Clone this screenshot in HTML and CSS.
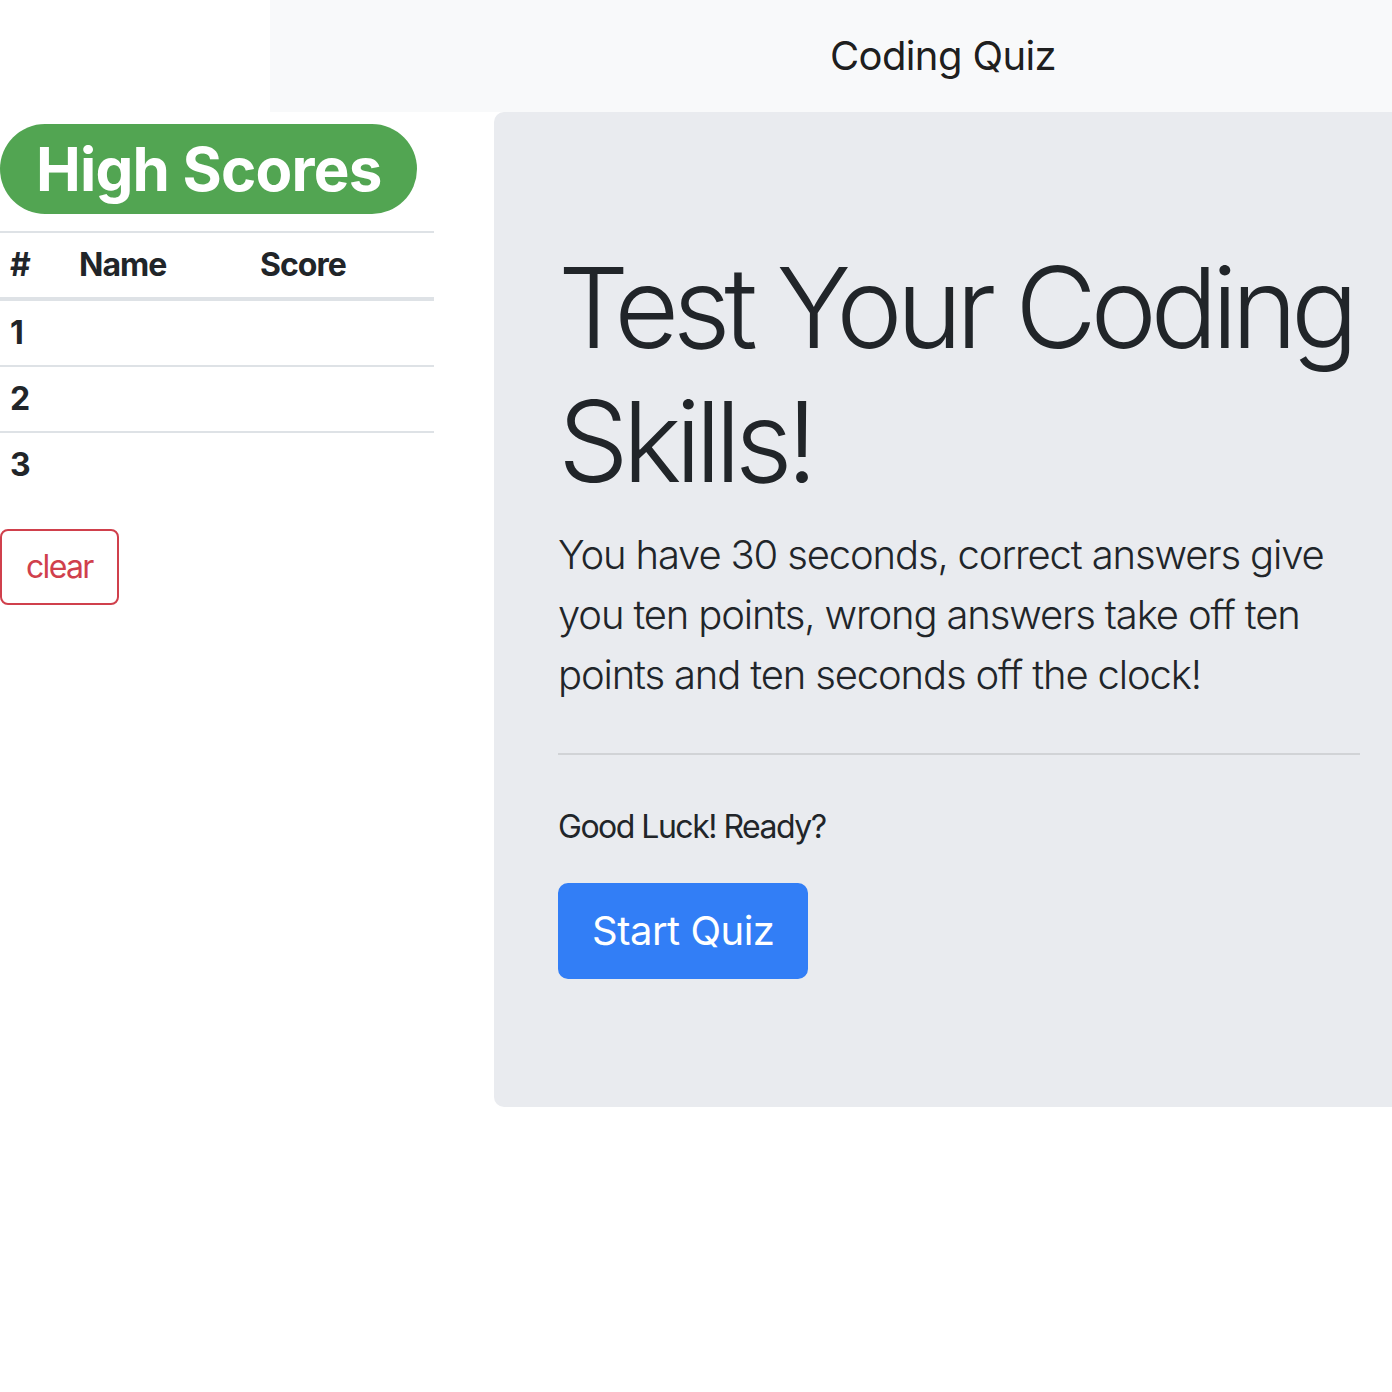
FILE: index.html
```html
<!DOCTYPE html>
<html lang="en">
<head>
<meta charset="utf-8">
<title>Coding Quiz</title>
<link rel="stylesheet" href="styles.css">
</head>
<body>
<div class="top-row">
  <div class="top-spacer"></div>
  <nav class="navbar"><span class="brand">Coding Quiz</span></nav>
</div>
<div class="main-row">
  <aside class="scores">
    <h1 class="scores-title"><span class="badge">High Scores</span></h1>
    <table class="table">
      <thead>
        <tr><th class="c1">#</th><th class="c2">Name</th><th class="c3">Score</th></tr>
      </thead>
      <tbody>
        <tr><th>1</th><td></td><td></td></tr>
        <tr><th>2</th><td></td><td></td></tr>
        <tr><th>3</th><td></td><td></td></tr>
      </tbody>
    </table>
    <button class="btn-clear">clear</button>
  </aside>
  <section class="jumbotron">
    <h1 class="display">Test Your Coding Skills!</h1>
    <p class="lead">You have 30 seconds, correct answers give you ten points, wrong answers take off ten points and ten seconds off the clock!</p>
    <hr class="divider">
    <p class="ready">Good Luck! Ready?</p>
    <button class="btn-start">Start Quiz</button>
  </section>
</div>
</body>
</html>
```

FILE: styles.css
```css
html, body {
  margin: 0;
  padding: 0;
  background: #fff;
}
body {
  font-family: Inter, "Liberation Sans", sans-serif;
  color: #212529;
  font-size: 32px;
  line-height: 1.5;
}
.top-row {
  display: flex;
  height: 112px;
}
.top-spacer {
  flex: 0 0 270px;
}
.navbar {
  flex: 1 1 auto;
  background: #f8f9fa;
  display: flex;
  justify-content: center;
  align-items: center;
  padding: 16px 0 16px 224px;
}
.brand {
  font-size: 40px;
  line-height: 60px;
  padding: 10px 0;
  color: rgba(0,0,0,.9);
  letter-spacing: -0.6px;
}
.main-row {
  display: flex;
  align-items: flex-start;
}
.scores {
  flex: 0 0 434px;
  margin-right: 60px;
  padding-top: 12px;
}
.scores-title {
  margin: 0 0 17px;
  font-size: 80px;
  line-height: 1;
  display: flex;
}
.badge {
  display: inline-block;
  background: #52a552;
  color: #fff;
  font-size: 60px;
  font-weight: 700;
  line-height: 1;
  padding: 15px 36px;
  border-radius: 60px;
  letter-spacing: -0.8px;
}
.table {
  width: 434px;
  border-collapse: collapse;
  font-size: 32px;
  line-height: 48px;
}
.table th, .table td {
  padding: 8px 10px;
  border-top: 2px solid #dee2e6;
  text-align: left;
  vertical-align: top;
  font-weight: 700;
}
.table thead th {
  border-bottom: 4px solid #dee2e6;
  letter-spacing: -1px;
}
.table tbody tr:first-child th, .table tbody tr:first-child td {
  border-top: 0;
}
.c1 { width: 49px; }
.c2 { width: 161px; }
.c3 { width: auto; }
.btn-clear {
  margin-top: 32px;
  font-family: inherit;
  font-size: 32px;
  line-height: 48px;
  padding: 12px 24px;
  color: #d0404c;
  background: transparent;
  border: 2px solid #d0404c;
  border-radius: 8px;
  letter-spacing: -1.7px;
}
.jumbotron {
  flex: 1 1 auto;
  min-width: 0;
  background: #e9ebef;
  padding: 128px 32px 128px 64px;
  border-radius: 10px 0 0 10px;
}
.display {
  margin: 0 0 16px;
  font-size: 112px;
  font-weight: 300;
  line-height: 1.2;
  letter-spacing: -6.3px;
}
.lead {
  margin: 0 0 32px;
  font-size: 40px;
  font-weight: 300;
  line-height: 60px;
  letter-spacing: -1.15px;
}
.divider {
  margin: 48px 0;
  border: 0;
  border-top: 2px solid rgba(0,0,0,.1);
}
.ready {
  margin: 0 0 32px;
  font-size: 32px;
  line-height: 48px;
  letter-spacing: -1.5px;
}
.btn-start {
  display: block;
  font-family: inherit;
  font-size: 40px;
  line-height: 60px;
  padding: 16px 32px;
  color: #fff;
  background: #327ef6;
  border: 2px solid #327ef6;
  border-radius: 10px;
  letter-spacing: -0.5px;
}
```
